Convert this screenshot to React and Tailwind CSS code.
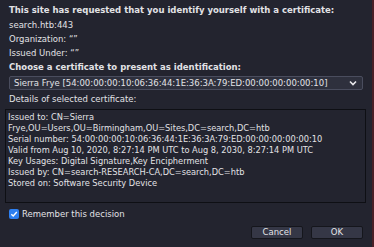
export default function App() {
  return (
    <div
      className="w-[374px] h-[247px] bg-[#23242f] text-[#e2e2e6] overflow-hidden flex border-r-2 border-[#4a1f26]"
      style={{ fontFamily: '"DejaVu Sans", sans-serif' }}
    >
      <div className="flex-1 flex flex-col text-[8.5px] leading-[14px]">
        <div className="px-[9px] pt-[3px]">
          <div className="font-bold">This site has requested that you identify yourself with a certificate:</div>
          <div className="mt-[1px]">search.htb:443</div>
          <div>Organization: “”</div>
          <div>Issued Under: “”</div>
          <div className="font-bold">Choose a certificate to present as identification:</div>
        </div>

        <div className="mx-[9px] mt-[2px] mr-[9px] h-[14px] flex items-center justify-between rounded-[2px] border border-[#4a4d5e] bg-[#2e303d] pl-[4px] pr-[5px]">
          <span>Sierra Frye [54:00:00:00:10:06:36:44:1E:36:3A:79:ED:00:00:00:00:00:10]</span>
          <svg width="8" height="6" viewBox="0 0 8 6">
            <path d="M1 1.5 L4 4.5 L7 1.5" stroke="#e8e8ec" strokeWidth="1.6" fill="none" />
          </svg>
        </div>

        <div className="px-[9px] mt-[2px]">Details of selected certificate:</div>

        <div className="mx-[5px] mr-[6px] mt-[3px] h-[94px] border border-[#0e0f14] px-[2px] pt-[2px] leading-[11px] text-[8.25px]">
          <div>Issued to: CN=Sierra</div>
          <div>Frye,OU=Users,OU=Birmingham,OU=Sites,DC=search,DC=htb</div>
          <div>Serial number: 54:00:00:00:10:06:36:44:1E:36:3A:79:ED:00:00:00:00:00:10</div>
          <div>Valid from Aug 10, 2020, 8:27:14 PM UTC to Aug 8, 2030, 8:27:14 PM UTC</div>
          <div>Key Usages: Digital Signature,Key Encipherment</div>
          <div>Issued by: CN=search-RESEARCH-CA,DC=search,DC=htb</div>
          <div>Stored on: Software Security Device</div>
        </div>

        <label className="flex items-center gap-[3px] px-[9px] mt-[4px]">
          <span className="w-[10px] h-[10px] rounded-[2px] bg-[#2d7ff0] flex items-center justify-center">
            <svg width="8" height="8" viewBox="0 0 8 8">
              <path d="M1.3 4.2 L3.2 6 L6.8 2" stroke="#fff" strokeWidth="1.4" fill="none" />
            </svg>
          </span>
          Remember this decision
        </label>

        <div className="flex justify-end gap-[8px] pr-[9px] mt-[5px]">
          <button className="w-[52px] h-[13px] rounded-[2px] border border-[#15161c] bg-[#353746] text-[8.5px] leading-[11px] text-[#e4e4e8]">
            Cancel
          </button>
          <button className="w-[52px] h-[13px] rounded-[2px] border border-[#15161c] bg-[#353746] text-[8.5px] leading-[11px] text-[#e4e4e8]">
            OK
          </button>
        </div>
      </div>
    </div>
  );
}
